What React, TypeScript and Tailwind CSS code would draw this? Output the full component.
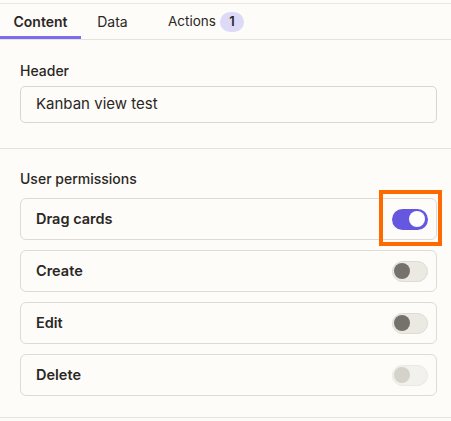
import React from "react";

type Perm = { label: string; state: "on" | "off" | "disabled"; highlight?: boolean };

const perms: Perm[] = [
  { label: "Drag cards", state: "on", highlight: true },
  { label: "Create", state: "off" },
  { label: "Edit", state: "off" },
  { label: "Delete", state: "disabled" },
];

function Toggle({ state }: { state: Perm["state"] }) {
  if (state === "on") {
    return (
      <div className="w-[36px] h-[21px] rounded-full bg-[#6557e0] flex items-center justify-end px-[3px]">
        <div className="w-[16px] h-[16px] rounded-full bg-white" />
      </div>
    );
  }
  const disabled = state === "disabled";
  return (
    <div
      className={
        disabled
          ? "w-[36px] h-[21px] rounded-full bg-[#f3f1ec] border border-[#ebe8e1] flex items-center px-[1px]"
          : "w-[36px] h-[21px] rounded-full bg-[#ebe9e1] border border-[#dedbd3] flex items-center px-[1px]"
      }
    >
      <div className={disabled ? "w-[16px] h-[16px] rounded-full bg-[#d5d2ca]" : "w-[16px] h-[16px] rounded-full bg-[#75716d]"} />
    </div>
  );
}

export default function App() {
  return (
    <div className="h-[421px] overflow-hidden bg-[#fdfcf9] pt-[3px] text-[#2b2724]" style={{ fontFamily: "Inter, 'Noto Sans', sans-serif" }}>
      <div className="border-t border-[#ebe8e2]">
        <div className="flex items-end h-[36px] border-b border-[#e6e3dc] text-[14px]">
          <div className="w-[81px] h-full flex items-center justify-center font-semibold border-b-[3px] border-[#7b6cf2] pt-[3px]">
            Content
          </div>
          <div className="w-[60px] h-full flex items-center justify-center pl-[3px]">Data</div>
          <div className="h-full flex items-center gap-[4px] pl-[27px]">
            <span className="text-[13.5px]">Actions</span>
            <span className="h-[20px] min-w-[24px] px-[7px] rounded-full bg-[#dcdaf7] text-[13px] font-semibold flex items-center justify-center">
              1
            </span>
          </div>
        </div>

        <div className="pl-5 pr-[14px] pt-[22px] pb-[25px] border-b border-[#e6e3dc]">
          <div className="text-[14px] font-medium leading-[18px]">Header</div>
          <div className="mt-[6px] h-[37px] border border-[#d9d6cf] rounded-[5px] bg-[#fdfcf9] flex items-center px-[15px] text-[15px]">
            Kanban view test
          </div>
        </div>

        <div className="pl-5 pr-[14px] pt-[21px] pb-[21px] border-b border-[#e6e3dc]">
          <div className="text-[14px] font-medium leading-[18px]">User permissions</div>
          <div className="mt-[10px] flex flex-col gap-[10px]">
            {perms.map((p) => (
              <div
                key={p.label}
                className="relative h-[42px] border border-[#dedbd4] rounded-[6px] flex items-center justify-between pl-[15px] pr-[8px]"
              >
                <span className="text-[14.5px] font-semibold">{p.label}</span>
                <Toggle state={p.state} />
                {p.highlight && (
                  <div className="absolute left-[358px] top-[-9px] w-[63px] h-[56px] border-[4px] border-[#ff6a00]" />
                )}
              </div>
            ))}
          </div>
        </div>
      </div>
    </div>
  );
}
